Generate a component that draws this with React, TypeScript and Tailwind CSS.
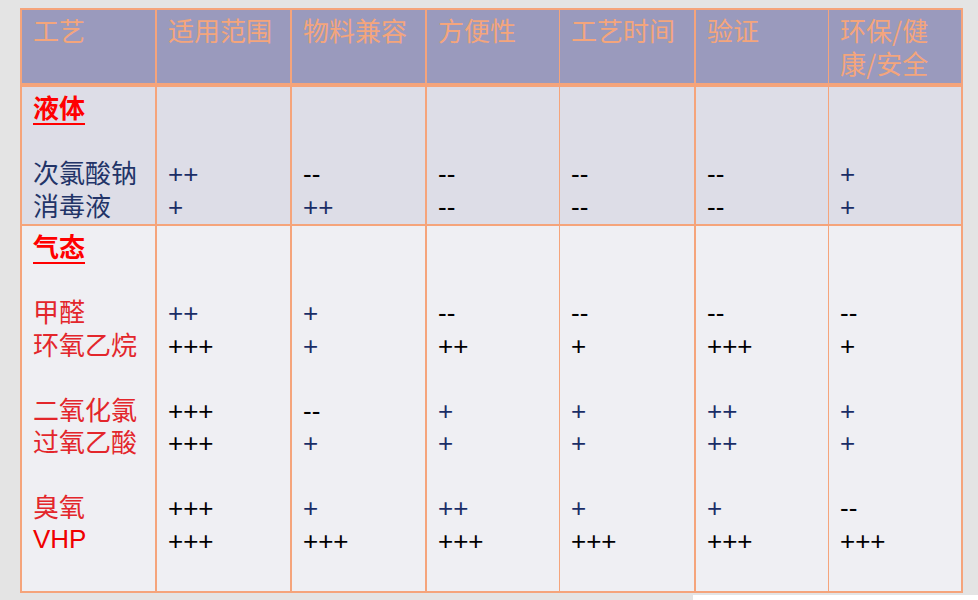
import React from "react";

const heads = ["工艺", "适用范围", "物料兼容", "方便性", "工艺时间", "验证", "环保/健\n康/安全"];

// values per row: 6 data columns
const liquidRows = [
  { name: "次氯酸钠", vals: ["++", "--", "--", "--", "--", "+"] },
  { name: "消毒液", vals: ["+", "++", "--", "--", "--", "+"] },
];

const gasRows = [
  { name: "甲醛", vals: ["++", "+", "--", "--", "--", "--"] },
  { name: "环氧乙烷", vals: ["+++", "+", "++", "+", "+++", "+"], black: [2, 3, 5] },
  null,
  { name: "二氧化氯", vals: ["+++", "--", "+", "+", "++", "+"] },
  { name: "过氧乙酸", vals: ["+++", "+", "+", "+", "++", "+"] },
  null,
  { name: "臭氧", vals: ["+++", "+", "++", "+", "+", "--"] },
  { name: "VHP", vals: ["+++", "+++", "+++", "+++", "+++", "+++"], vhp: true },
  null,
];

type Row = { name: string; vals: string[]; black?: number[]; vhp?: boolean } | null;

const cols = "grid grid-cols-[133px_135px_135px_134px_135px_134px_1fr]";
const colBorders = ["", "border-l-2", "border-l-2", "border-l-2", "border-l", "border-l-2", "border-l"];

const cjk = "font-['Noto_Sans_CJK_SC','Noto_Sans',sans-serif]";
const latin = "font-['Liberation_Sans',Arial,sans-serif]";

function valueColor(v: string, row: NonNullable<Row>, i: number) {
  if (v === "+++" || v === "--") return "text-black";
  if (row.black && row.black.includes(i)) return "text-black";
  return "text-[#1a2d66]";
}

function Line({ children, className = "" }: { children?: React.ReactNode; className?: string }) {
  return <div className={`h-[32.5px] leading-[32.5px] whitespace-nowrap ${className}`}>{children ?? "\u00a0"}</div>;
}

function Section({ title, rows, gas }: { title: string; rows: Row[]; gas?: boolean }) {
  return (
    <div className={cols}>
      {/* name column */}
      <div className="pl-[11px] pt-[4px] pb-[3px]">
        <Line className={`${cjk} text-[#ff0000] font-bold underline decoration-2 underline-offset-[5px]`}>{title}</Line>
        <Line />
        {rows.map((r, k) =>
          r ? (
            <Line
              key={k}
              className={
                r.vhp
                  ? `${latin} text-[#f00000]`
                  : gas
                  ? `${cjk} text-[#e3262b]`
                  : `${cjk} text-[#223468]`
              }
            >
              {r.name}
            </Line>
          ) : (
            <Line key={k} />
          )
        )}
      </div>
      {[0, 1, 2, 3, 4, 5].map((c) => (
        <div key={c} className={`pl-[11px] pt-[4px] pb-[3px] ${colBorders[c + 1]} border-[#f5a47b] ${latin}`}>
          <Line />
          <Line />
          {rows.map((r, k) =>
            r ? (
              <Line key={k} className={`translate-y-[2px] ${valueColor(r.vals[c], r, c)}`}>
                {r.vals[c]}
              </Line>
            ) : (
              <Line key={k} />
            )
          )}
        </div>
      ))}
    </div>
  );
}

export default function App() {
  return (
    <div className="w-[978px] h-[600px] bg-[#e4e4e4] overflow-hidden pt-[8px] text-[26px]">
      <div className="ml-[20px] w-[943px] border-2 border-[#f5a47b]">
        {/* Header */}
        <div className={`${cols} bg-[#9a9abd] border-b-4 border-[#f5a47b] h-[77px]`}>
          {heads.map((h, i) => (
            <div key={i} className={`pl-[11px] pt-[4px] ${colBorders[i]} border-[#f5a47b] ${cjk} text-[#f4a57c]`}>
              {h.split("\n").map((l, j) => (
                <Line key={j}>{l}</Line>
              ))}
            </div>
          ))}
        </div>
        {/* Liquid */}
        <div className="bg-[#dddde7] border-b-2 border-[#f5a47b]">
          <Section title="液体" rows={liquidRows} />
        </div>
        {/* Gas */}
        <div className="bg-[#efeff3]">
          <Section title="气态" rows={gasRows} gas />
        </div>
      </div>
      <div className="ml-[693px] mt-[2px] h-[10px] bg-white" />
    </div>
  );
}
